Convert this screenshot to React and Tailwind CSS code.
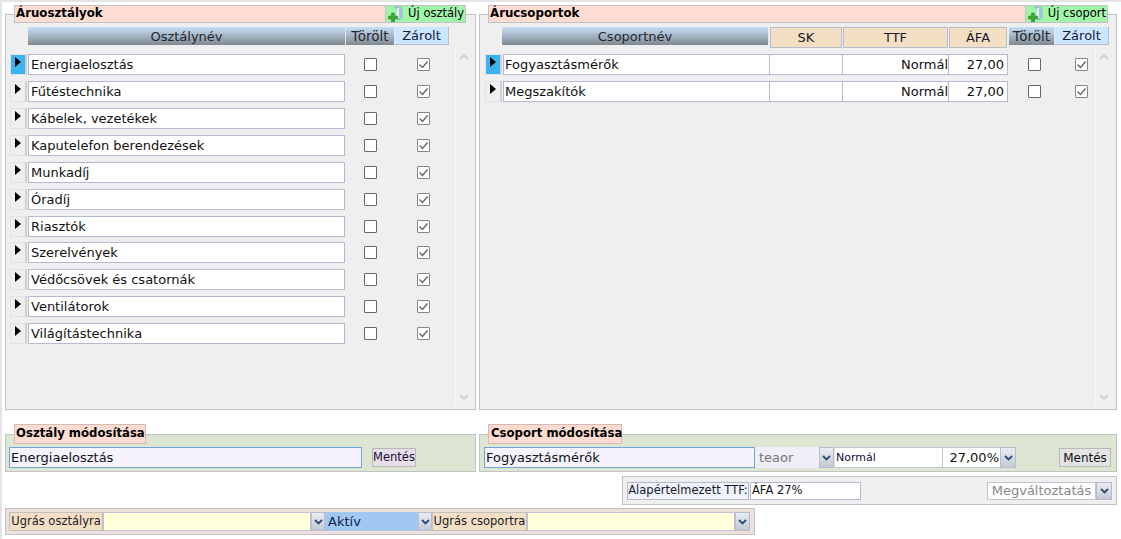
import React from "react";

const classes = ["Energiaelosztás","Fűtéstechnika","Kábelek, vezetékek","Kaputelefon berendezések","Munkadíj","Óradíj","Riasztók","Szerelvények","Védőcsövek és csatornák","Ventilátorok","Világítástechnika"];

const Plus = () => (
  <svg width="16" height="16" viewBox="0 0 16 16" className="shrink-0">
    <path d="M6 1h6l2 1v10l-4 2V4z" fill="#a9c4e6" stroke="#7f9fca" strokeWidth="0.5" />
    <path d="M9 2h2v10H9z" fill="#e6eefa" />
    <path d="M3.5 7h3v3h3v3h-3v3h-3v-3h-3v-3h3z" fill="#3fa53a" stroke="#2d7f2d" strokeWidth="0.5" />
  </svg>
);

const Check = ({ checked }) => (
  <span className={`w-[13px] h-[13px] shrink-0 rounded-[1px] flex items-center justify-center bg-white border ${checked ? "border-[#868686]" : "border-[#666666]"}`}>
    {checked && (
      <svg width="11" height="11" viewBox="0 0 11 11">
        <path d="M1.5 5.5L4.5 8.5L9.5 2.5" fill="none" stroke="#666666" strokeWidth="1.4" />
      </svg>
    )}
  </span>
);

const RowHead = ({ active }) => (
  <div className={`w-[17px] h-[21px] shrink-0 flex justify-center pt-[2px] border border-[#e2e2e2] border-r-2 border-r-[#d0d0d0] ${active ? "bg-[#3cb4ef]" : "bg-[#efefef]"}`}>
    <svg width="6" height="10" viewBox="0 0 6 10"><path d="M0 0L6 5L0 10z" fill="#000" /></svg>
  </div>
);

const Arrow = ({ w = "w-[14px]", h = "h-[19px]" }) => (
  <div className={`${w} ${h} shrink-0 flex items-center justify-center bg-gradient-to-b from-[#e8ecf2] to-[#c3c9d3] border border-[#b8bccb]`}>
    <svg width="9" height="6" viewBox="0 0 9 6"><path d="M1 1L4.5 4.5L8 1" fill="none" stroke="#2c4a78" strokeWidth="1.8" /></svg>
  </div>
);

const Scroll = () => (
  <div className="w-[17px] shrink-0 h-[358px] flex flex-col justify-between items-center py-[6px] border-l border-[#f8f8f8]">
    <svg width="10" height="6" viewBox="0 0 10 6"><path d="M1 5L5 1L9 5" fill="none" stroke="#cfcfcf" strokeWidth="1.8" /></svg>
    <svg width="10" height="6" viewBox="0 0 10 6"><path d="M1 1L5 5L9 1" fill="none" stroke="#cfcfcf" strokeWidth="1.8" /></svg>
  </div>
);

const gradHead = "bg-gradient-to-b from-[#c7def6] via-[#a5b4c4] to-[#7f888e] border-r border-[#e8e8e8] text-[#1f2730] h-[18px] flex items-center justify-center shrink-0";
const tan = "bg-[#f3e0c4] border border-[#b8bccb] h-[21px] flex items-center justify-center text-[#1a1a2a] shrink-0";
const cell = "h-[21px] shrink-0 bg-white border border-[#b8b8d0] flex items-center";

export default function App() {
  return (
    <div className="w-[1121px] h-[539px] overflow-hidden bg-white border-t-2 border-l-2 border-[#e4e4e4] text-[13px] leading-none text-[#111] flex flex-col" style={{ fontFamily: '"DejaVu Sans", Verdana, sans-serif' }}>
      <div className="flex gap-[3px] pl-[3px] pt-[3px] h-[408px]">
        {/* Left panel */}
        <fieldset className="w-[471px] h-[405px] bg-[#efefef] border border-[#c2c2c2] min-w-0">
          <legend className="ml-[8px] w-[452px] h-[18px] bg-[#fddcd2] border border-[#c2c2c2] flex items-center justify-between pl-[1px] font-bold text-[11.8px] text-black">
            <span>Áruosztályok</span>
            <span className="w-[81px] h-[18px] -mr-px bg-[#9ff5a8] border border-[#c2c2c2] flex items-center justify-between font-normal pr-[1px] pl-[2px]"><Plus /><span className="text-[11.5px]">Új osztály</span></span>
          </legend>
          <div className="flex ml-[22px] mt-[4px] text-[13px]">
            <div className={`${gradHead} w-[318px]`}>Osztálynév</div>
            <div className={`${gradHead} w-[49px] text-[13.5px] pt-px`}>Törölt</div>
            <div className="w-[54px] h-[18px] bg-[#cde6ff] border-b border-r border-[#b8bccb] flex items-center justify-center text-[#10203a]">Zárolt</div>
          </div>
          <div className="flex mt-[3px]">
            <div className="w-[445px] ml-[4px] pt-[6.4px] flex flex-col gap-[5.86px]">
              {classes.map((c, i) => (
                <div key={c} className="flex items-center">
                  <RowHead active={i === 0} />
                  <div className={`${cell} w-[317px] ml-px pl-[2px]`}>{c}</div>
                  <div className="w-[51px] flex justify-center"><Check /></div>
                  <div className="w-[54px] flex justify-center"><Check checked /></div>
                </div>
              ))}
            </div>
            <Scroll />
          </div>
        </fieldset>

        {/* Right panel */}
        <fieldset className="w-[638px] h-[405px] bg-[#efefef] border border-[#c2c2c2] min-w-0">
          <legend className="ml-[8px] w-[620px] h-[18px] bg-[#fddcd2] border border-[#c2c2c2] flex items-center justify-between pl-[1px] font-bold text-[11.8px] text-black">
            <span>Árucsoportok</span>
            <span className="w-[83px] h-[18px] -mr-px bg-[#9ff5a8] border border-[#c2c2c2] flex items-center justify-between font-normal pr-[1px] pl-[2px]"><Plus /><span className="text-[11.5px]">Új csoport</span></span>
          </legend>
          <div className="flex items-start ml-[22px] mt-[4px] gap-px">
            <div className={`${gradHead} w-[267px]`}>Csoportnév</div>
            <div className={`${tan} w-[72px]`}>SK</div>
            <div className={`${tan} w-[105px]`}>TTF</div>
            <div className={`${tan} w-[58px]`}>ÁFA</div>
            <div className={`${gradHead} w-[46px] ml-[1px] text-[13.5px] pt-px`}>Törölt</div>
            <div className="w-[54px] -ml-px h-[18px] shrink-0 bg-[#cde6ff] border-b border-r border-[#b8bccb] flex items-center justify-center text-[#10203a]">Zárolt</div>
          </div>
          <div className="flex">
            <div className="w-[610px] ml-[5px] pt-[6px] flex flex-col gap-[6px]">
              {["Fogyasztásmérők", "Megszakítók"].map((c, i) => (
                <div key={c} className="flex items-center">
                  <RowHead active={i === 0} />
                  <div className={`${cell} w-[267px] ml-px pl-[1px]`}>{c}</div>
                  <div className={`${cell} w-[73px] border-l-0`} />
                  <div className={`${cell} w-[106px] border-l-0 justify-end`}>Normál</div>
                  <div className={`${cell} w-[59px] border-l-0 justify-end pr-[3px]`}>27,00</div>
                  <div className="w-[53px] flex justify-center"><Check /></div>
                  <div className="ml-[14px]"><Check checked /></div>
                </div>
              ))}
            </div>
            <Scroll />
          </div>
        </fieldset>
      </div>

      <div className="flex gap-[3px] pl-[3px] mt-[14px] h-[48px]">
        <fieldset className="w-[471px] h-[48px] bg-[#dce6d2] border border-[#c2c2c2] min-w-0">
          <legend className="ml-[8px] w-[132px] h-[20px] bg-[#fddcd2] border border-[#d8b8b0] flex items-center pl-[1px] font-bold text-[11.7px] text-black whitespace-nowrap">Osztály módosítása</legend>
          <div className="flex items-center pl-[3px] pt-[3px]">
            <div className="w-[353px] h-[21px] bg-[#f5f3ff] border border-[#6fa3dc] flex items-center pl-[1px]">Energiaelosztás</div>
            <div className="ml-[10px] w-[44px] h-[19px] bg-[#e4e0e6] border border-[#b8b8b8] flex items-center justify-center text-[11.5px] text-[#1a0a3a]">Mentés</div>
          </div>
        </fieldset>
        <fieldset className="w-[638px] h-[48px] bg-[#dce6d2] border border-[#c2c2c2] min-w-0">
          <legend className="ml-[8px] w-[134px] h-[20px] bg-[#fddcd2] border border-[#d8b8b0] flex items-center pl-[2px] font-bold text-[11.7px] text-black whitespace-nowrap">Csoport módosítása</legend>
          <div className="flex items-center pl-[4px] pt-[3px]">
            <div className="w-[271px] h-[21px] bg-[#f5f3ff] border border-[#6fa3dc] flex items-center pl-[1px]">Fogyasztásmérők</div>
            <div className="w-[64px] h-[21px] bg-[#f0eef8] flex items-center pl-[4px] text-[#777]">teaor</div>
            <Arrow w="w-[15px]" h="h-[21px]" />
            <div className="w-[107px] h-[21px] ml-px bg-white border-y border-[#c2c2d2] flex items-center pl-[1px] text-[11px] text-[#1a0a3a]">Normál</div>
            <div className="w-[58px] h-[21px] bg-white border border-r-0 border-[#c2c2d2] flex items-center justify-end pr-[1px]">27,00%</div>
            <Arrow w="w-[16px]" h="h-[21px]" />
            <div className="ml-[43px] w-[52px] h-[19px] bg-[#e4e4e4] border border-[#b8b8b8] flex items-center justify-center text-[12px]">Mentés</div>
          </div>
        </fieldset>
      </div>

      <div className="ml-[620px] mt-[4px] w-[495px] h-[29px] bg-[#efefef] border border-[#c2c2c2] flex items-center pl-[4px]">
        <div className="w-[122px] h-[18px] bg-[#eef2fa] border border-[#b8b8c8] flex items-center justify-center text-[11.5px] text-[#1a1a2a] whitespace-nowrap">Alapértelmezett TTF:</div>
        <div className="w-[111px] ml-px h-[18px] bg-white border border-[#b8b8d0] flex items-center pl-[1px] text-[11.5px]">ÁFA 27%</div>
        <div className="ml-[126px] w-[109px] h-[18px] bg-white border border-[#c2c2d2] flex items-center justify-center text-[#888] whitespace-nowrap">Megváltoztatás</div>
        <Arrow w="w-[16px]" h="h-[18px]" />
      </div>

      <div className="ml-[3px] mt-[3px] w-[750px] h-[27px] bg-[#efdfdd] border border-[#c2c2c2] flex items-center pl-[3px] text-[11.5px]">
        <div className="w-[94px] h-[19px] bg-[#f3e0c4] border border-[#c2c2c2] flex items-center justify-center text-[#1a1a2a] whitespace-nowrap">Ugrás osztályra</div>
        <div className="w-[208px] h-[19px] bg-[#ffffdc] border border-[#c2c2d2]" />
        <Arrow />
        <div className="w-[93px] h-[19px] bg-[#a0c8f0] flex items-center pl-[3px] text-[13px] text-[#10204a]">Aktív</div>
        <Arrow />
        <div className="w-[95px] h-[19px] bg-[#f3e0c4] border border-[#c2c2c2] flex items-center justify-center text-[#1a1a2a] whitespace-nowrap">Ugrás csoportra</div>
        <div className="w-[208px] h-[19px] bg-[#ffffdc] border border-[#c2c2d2]" />
        <Arrow w="w-[15px]" />
      </div>
    </div>
  );
}
